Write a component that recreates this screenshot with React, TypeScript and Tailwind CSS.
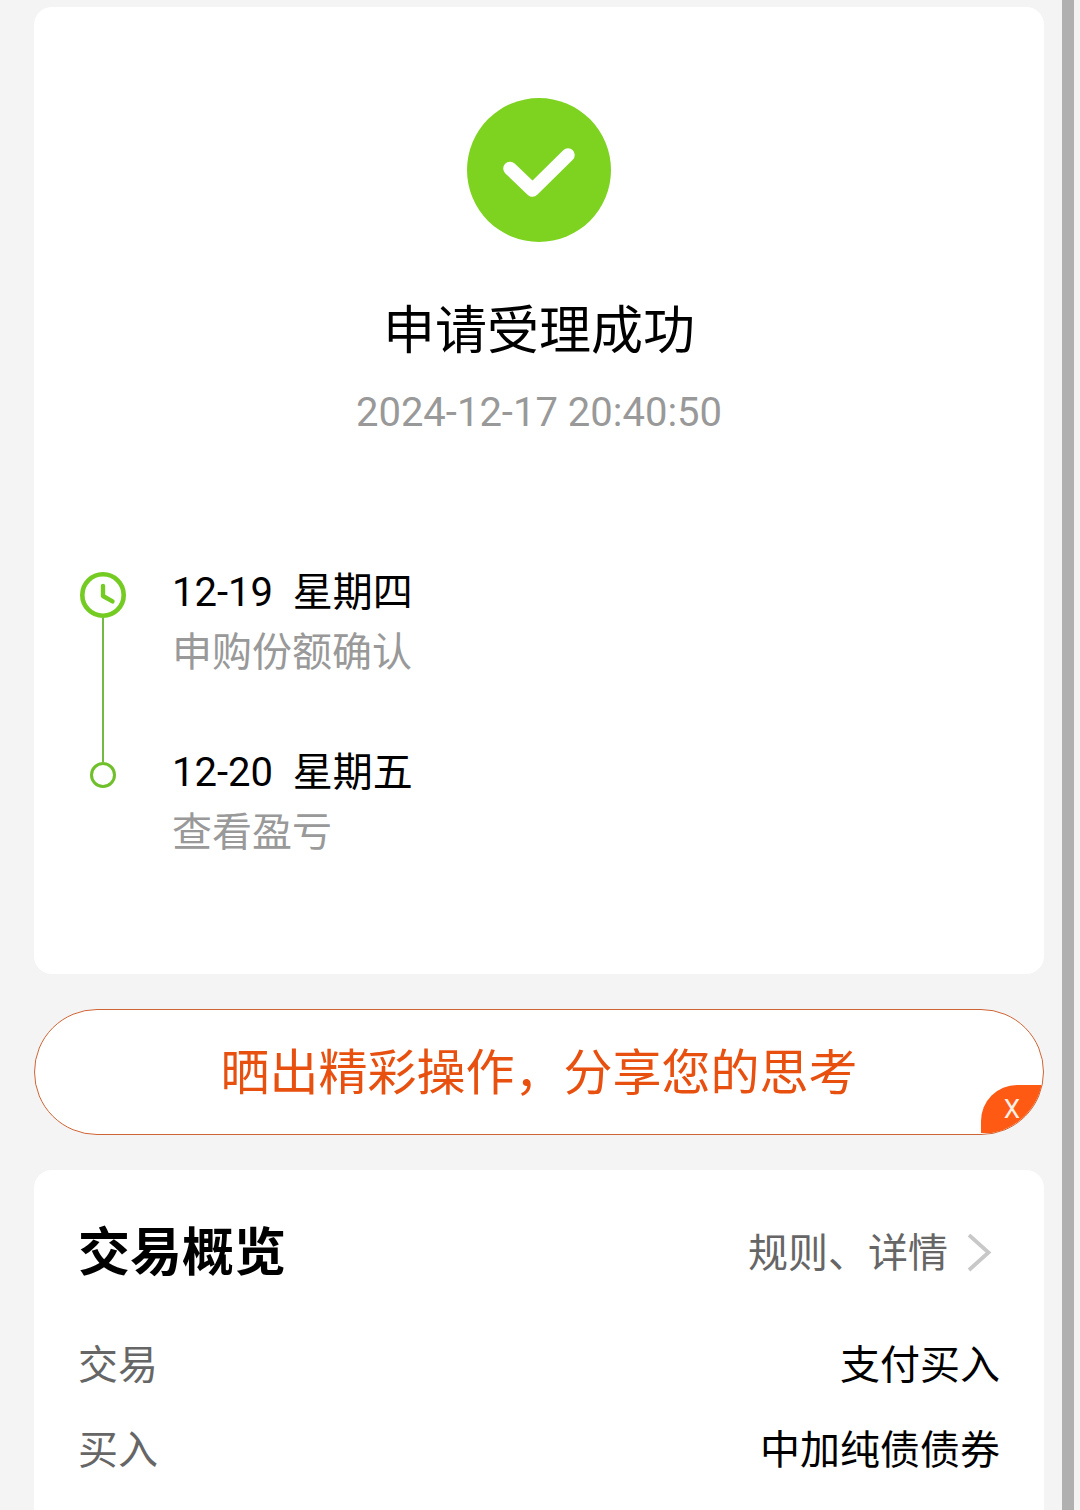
import React from "react";

const steps = [
  { date: "12-19", weekday: "星期四", label: "申购份额确认" },
  { date: "12-20", weekday: "星期五", label: "查看盈亏" },
];

const overview = [
  { name: "交易", value: "支付买入" },
  { name: "买入", value: "中加纯债债券" },
];

const SuccessIcon = () => (
  <svg className="size-36" viewBox="0 0 144 144" fill="none" aria-hidden="true">
    <circle cx="72" cy="72" r="72" fill="#7ed321" />
    <path
      d="M43 70.5 65.5 92 101 57"
      stroke="#fff"
      strokeWidth="13.5"
      strokeLinecap="round"
      strokeLinejoin="round"
    />
  </svg>
);

const ClockIcon = () => (
  <svg className="size-[46px] shrink-0" viewBox="0 0 46 46" fill="none" stroke="#74cb22" aria-hidden="true">
    <circle cx="23" cy="23" r="20.7" strokeWidth="4.6" />
    <path d="M23 14V24L32.5 29.4" strokeWidth="4.4" strokeLinecap="round" strokeLinejoin="round" />
  </svg>
);

const ChevronIcon = () => (
  <svg className="h-10 w-9" viewBox="0 0 36 40" fill="none" aria-hidden="true">
    <path d="M5 1 24.5 18.5 5 36" stroke="#c8c8c8" strokeWidth="3.8" />
  </svg>
);

/* Left rail of the timeline: clock on the first step, small ring on the others */
const Rail = ({ first }: { first: boolean }) => (
  <div className="flex w-[50px] flex-col items-center">
    {first ? (
      <>
        <div className="h-[9px] shrink-0" />
        <ClockIcon />
        <div className="w-[2px] flex-1 bg-[#74b943]" />
      </>
    ) : (
      <>
        <div className="h-[19px] w-[2px] bg-[#74b943]" />
        <div className="size-[26px] rounded-full border-3 border-[#70c02c]" />
      </>
    )}
  </div>
);

const Timeline = () => (
  <ol className="mt-[120px] w-full">
    {steps.map((step, i) => (
      <li key={step.date} className="flex gap-11">
        <Rail first={i === 0} />
        <div className={i < steps.length - 1 ? "pb-[60px]" : ""}>
          <p className="h-[60px] text-black">
            {step.date}&nbsp;&nbsp;{step.weekday}
          </p>
          <p className="h-[60px] text-[#999]">{step.label}</p>
        </div>
      </li>
    ))}
  </ol>
);

const ShareBanner = () => (
  <div className="relative overflow-hidden rounded-full border border-[#cf6535] bg-white">
    <button type="button" className="block w-full pt-7 pb-6 text-[49px] leading-[72px] text-[#e8500f]">
      晒出精彩操作，分享您的思考
    </button>
    <button
      type="button"
      className="absolute right-0 bottom-px h-12 w-[62px] rounded-tl-[36px] bg-[#ff5a14] text-[26px] leading-[48px] text-[#fff0e6]"
    >
      X
    </button>
  </div>
);

const Overview = () => (
  <section className="flex-1 rounded-t-[18px] bg-white px-11 pt-12">
    <div className="flex items-center justify-between">
      <h2 className="text-[52px] leading-[72px] font-bold text-black">交易概览</h2>
      <a href="#rules" className="flex items-center gap-4 text-[#666]">
        规则、详情
        <ChevronIcon />
      </a>
    </div>
    <dl className="mt-[46px] flex flex-col gap-[25px]">
      {overview.map((row) => (
        <div key={row.name} className="flex h-[60px] justify-between">
          <dt className="text-[#666]">{row.name}</dt>
          <dd className="text-black">{row.value}</dd>
        </div>
      ))}
    </dl>
  </section>
);

export default function App() {
  return (
    <div className="flex min-h-screen bg-[#f4f4f4] font-[Roboto,'Noto_Sans_CJK_SC',sans-serif] text-[40px] leading-[60px]">
      <main className="flex flex-1 flex-col gap-[35px] pt-[7px] pr-[18px] pl-[34px]">
        <section className="flex flex-col items-center rounded-[18px] bg-white px-11 pt-[91px] pb-[111px]">
          <SuccessIcon />
          <h1 className="mt-[54px] text-[52px] leading-[72px] text-black">申请受理成功</h1>
          <p className="mt-[15px] text-[#999]">2024-12-17 20:40:50</p>
          <Timeline />
        </section>
        <ShareBanner />
        <Overview />
      </main>
      {/* scrollbar */}
      <div className="mr-[6px] w-3 bg-[#b0b0b0]" />
    </div>
  );
}
